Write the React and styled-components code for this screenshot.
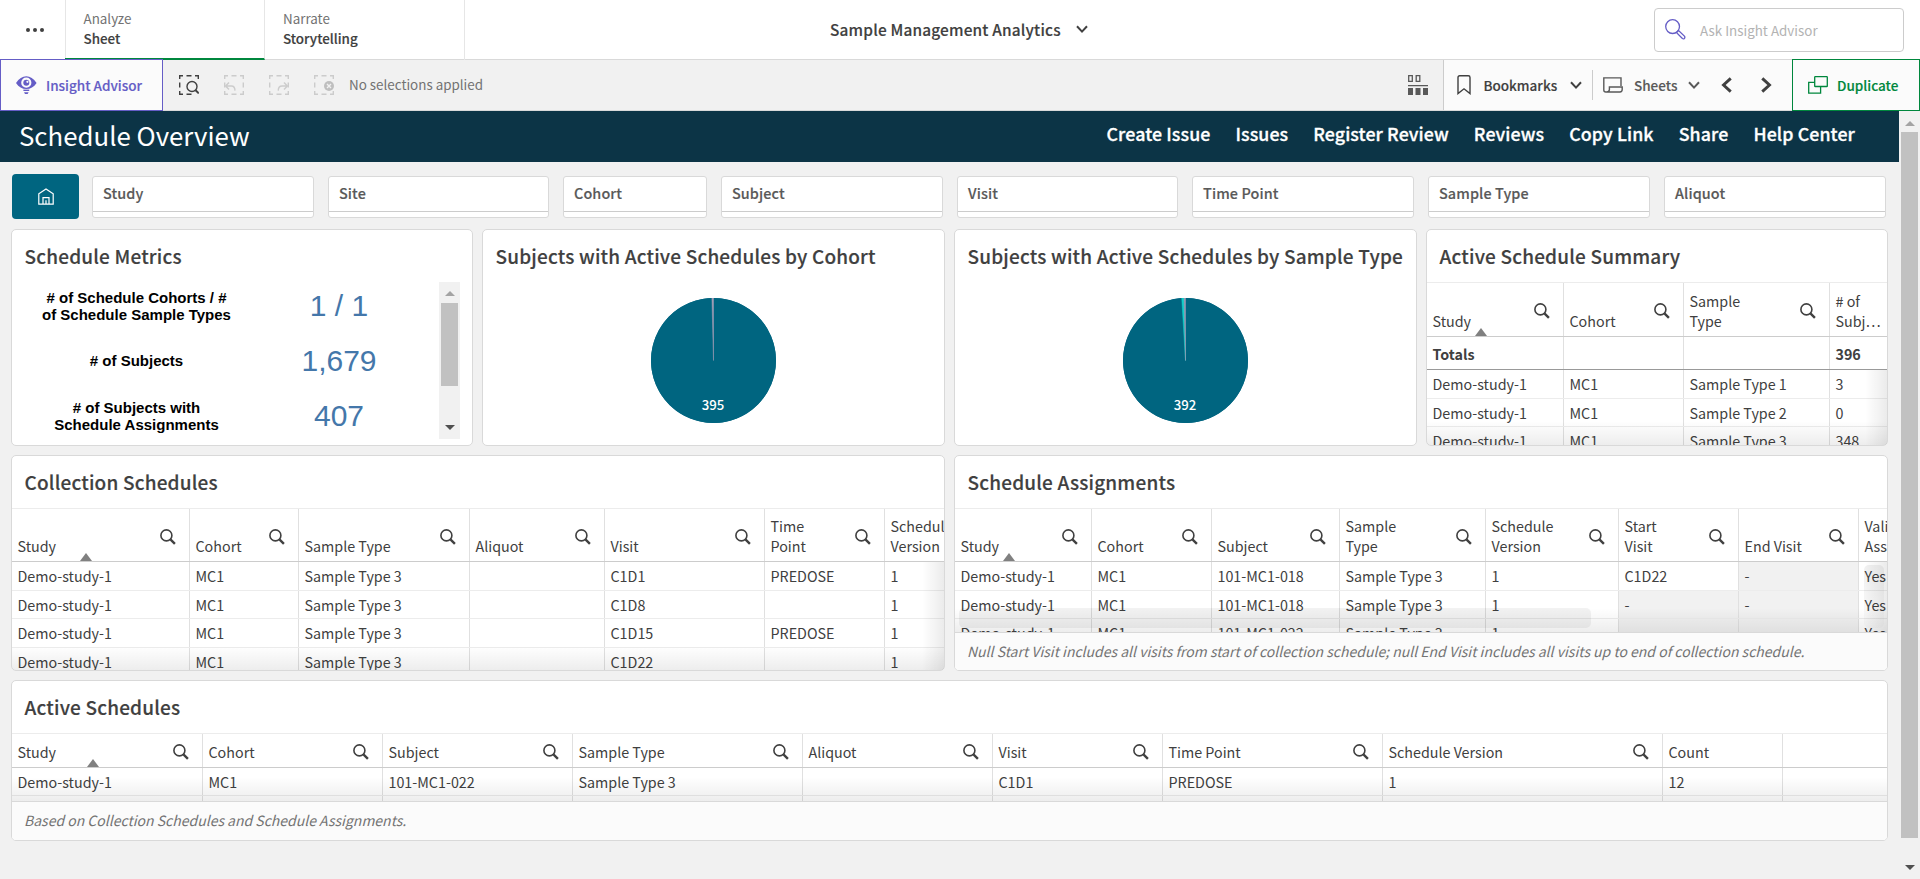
import React from 'react'
import styled, { createGlobalStyle, css } from 'styled-components'

const GlobalStyle = createGlobalStyle`
  * {
    box-sizing: border-box;
  }

  html, body {
    margin: 0;
    padding: 0;
    background: #f1f1f1;
    overflow: hidden;
  }

  body {
    font-family: 'Noto Sans CJK JP', 'Noto Sans', sans-serif;
    font-size: 14.3px;
    color: #404040;
  }
`

const Page = styled.div`
  display: flex;
  flex-direction: column;
  width: 1920px;
  height: 879px;
  background: #f1f1f1;
`

/* the medium weight is a little light, so it gets a thin stroke */
const semibold = css`
  font-weight: 500;
  -webkit-text-stroke: 0.15px currentColor;
`

/* top bar */

const TopBar = styled.header`
  display: flex;
  height: 60px;
  background: #fff;
  border-bottom: 1px solid #d9d9d9;
`

const MenuButton = styled.div`
  display: flex;
  align-items: center;
  justify-content: center;
  width: 66px;
  padding: 1px 0 0 5px;
  border-right: 1px solid #e6e6e6;
`

const Tab = styled.div`
  width: ${props => props.$width}px;
  height: 60px;
  padding: 8px 0 0 ${props => props.$pad}px;
  line-height: 20px;
  font-size: 13.4px;
  border-right: 1px solid #e6e6e6;
  color: #737373;
  ${props => props.$active && css`
    margin-left: -1px;
    border-bottom: 2px solid #00873d;
  `}

  strong {
    display: block;
    ${semibold}
    color: #404040;
  }
`

const AppTitle = styled.div`
  flex: 1;
  display: flex;
  align-items: center;
  padding: 0 0 1px 365px;
  font-size: 15.4px;
  letter-spacing: 0.18px;
  ${semibold}
  gap: 15px;
`

const AskBox = styled.div`
  display: flex;
  align-items: center;
  width: 250px;
  height: 44px;
  margin: 8px 16px 0 0;
  padding: 0 0 1px 10px;
  gap: 14px;
  border: 1px solid #ccc;
  border-radius: 4px;
  font-size: 13.4px;
  color: #b3b3b3;
`

/* selections toolbar */

const Toolbar = styled.div`
  display: flex;
  height: 51px;
  align-items: stretch;
  border-bottom: 1px solid #d9d9d9;
`

const AdvisorButton = styled.div`
  display: flex;
  align-items: center;
  width: 163px;
  height: 52px;
  margin-top: -1px;
  padding: 0 0 1px 15px;
  gap: 9px;
  border: 1px solid #655dc6;
  background: #fbfbfb;
  color: #655dc6;
  ${semibold}
  font-size: 13.5px;
`

const SelectionTools = styled.div`
  flex: 1;
  display: flex;
  align-items: center;
  gap: 25px;
  padding-left: 16px;
`

const SelectionText = styled.span`
  margin: -2px 0 0 -10px;
  color: #737373;
  font-size: 13.4px;
`

const GridButton = styled.div`
  display: flex;
  align-items: center;
  width: 36px;
  border-right: 1px solid #ccc;
`

const NavGroup = styled.div`
  display: flex;
  align-items: center;
  width: 348px;
  background: #fbfbfb;
`

const NavItem = styled.div`
  display: flex;
  align-items: center;
  gap: ${props => props.$gap}px;
  width: ${props => props.$width}px;
  height: 30px;
  padding-left: ${props => props.$pad}px;
  border-right: ${props => (props.$divider ? '1px solid #ccc' : '0')};
  ${semibold}
  font-size: 13.5px;
  color: ${props => props.$color || '#404040'};
`

const DuplicateButton = styled(AdvisorButton)`
  width: 128px;
  border-color: #00873d;
  color: #00873d;
`

/* sheet */

const SheetArea = styled.div`
  display: flex;
  flex: 1;
  min-height: 0;
`

const Sheet = styled.main`
  width: 1899px;
`

const SheetHeader = styled.div`
  display: flex;
  justify-content: space-between;
  height: 51px;
  padding: 0 44px 0 19px;
  background: #0c3446;
  color: #fff;
`

const SheetTitle = styled.h1`
  margin: 0;
  font-size: 25.8px;
  line-height: 48px;
  font-weight: 400;
`

const SheetLinks = styled.nav`
  display: flex;
  gap: 25px;
  font-size: 17.8px;
  letter-spacing: 0.1px;
  line-height: 45px;
  font-weight: 500;
  -webkit-text-stroke: 0.3px currentColor;
`

const Filters = styled.div`
  display: flex;
  align-items: flex-start;
  height: 45px;
  margin: 12px 0 10px 12px;
  gap: 14px;
`

const HomeButton = styled.div`
  display: flex;
  align-items: center;
  justify-content: center;
  width: 67px;
  height: 45px;
  margin-right: -1px;
  border-radius: 4px;
  background: #006580;
`

const Filter = styled.div`
  width: ${props => props.$width}px;
  height: 42px;
  margin-top: 2px;
  padding-left: 10px;
  line-height: 32px;
  border: 1px solid #d9d9d9;
  border-radius: 3px;
  background: linear-gradient(#ccc, #ccc) 0 34px / 100% 1px no-repeat #fff;
  ${semibold}
  font-size: 14.4px;
  letter-spacing: 0.1px;
  color: #595959;
`

const Grid = styled.div`
  display: grid;
  grid-template-columns: 462px 463px 463px 462px;
  grid-template-rows: 217px 216px 161px;
  gap: 9px;
  margin-left: 11px;
`

const CardBox = styled.section`
  display: flex;
  flex-direction: column;
  grid-column: span ${props => props.$span || 1};
  border: 1px solid #d9d9d9;
  border-radius: 5px;
  background: #fff;
  overflow: hidden;
`

const CardTitle = styled.h2`
  flex: none;
  height: 52px;
  margin: 0;
  padding-left: 12.5px;
  line-height: 52px;
  font-size: 19px;
  letter-spacing: 0.18px;
  ${semibold}
  white-space: nowrap;
`

const CardBody = styled.div`
  position: relative;
  flex: 1;
  min-height: 0;
  overflow: hidden;
`

const Footnote = styled.div`
  flex: none;
  height: ${props => props.$height}px;
  padding-left: 12px;
  line-height: 37px;
  border-top: 1px solid #d9d9d9;
  background: #fbfbfb;
  font-style: italic;
  font-size: 14px;
  color: #737373;
  white-space: nowrap;
`

/* tables */

const HeadRow = styled.div`
  display: flex;
  height: ${props => props.$height}px;
  border-top: 1px solid #ececec;
  border-bottom: 1px solid #ccc;
`

const cellBase = css`
  flex: ${props => (props.$width ? 'none' : '1')};
  width: ${props => (props.$width ? props.$width + 'px' : 'auto')};
  border-right: ${props => (props.$width ? '1px solid #e0e0e0' : '0')};
  white-space: pre;
`

const HeadCell = styled.div`
  ${cellBase}
  display: flex;
  align-items: center;
`

const HeadLabel = styled.div`
  position: relative;
  flex: 1;
  align-self: stretch;
  display: flex;
  align-items: flex-end;
  padding: 0 0 5.5px 5.5px;
  line-height: 20px;
`

const SortMark = styled.i`
  position: absolute;
  left: 50%;
  bottom: 0;
  margin-left: -6px;
  border: 6px solid transparent;
  border-top: 0;
  border-bottom: 8px solid #808080;
`

const SearchSlot = styled.div`
  width: 29px;
  height: 16px;
  margin-top: 3px;
  line-height: 0;
`

const Row = styled.div`
  display: flex;
  height: ${props => props.$height}px;
  border-bottom: 1px solid ${props => (props.$total ? '#999' : '#ececec')};
  font-weight: ${props => (props.$total ? 700 : 400)};
`

const Cell = styled.div`
  ${cellBase}
  padding-left: 5.5px;
  line-height: ${props => props.$line || 28}px;
  background: ${props => (props.$empty ? '#f1f1f1' : 'transparent')};
`

const FadeBottom = styled.div`
  position: absolute;
  left: 0;
  right: 0;
  bottom: 0;
  height: 24px;
  background: linear-gradient(rgba(0, 0, 0, 0), rgba(0, 0, 0, 0.07));
`

const FadeRight = styled.div`
  position: absolute;
  top: ${props => props.$top}px;
  right: 0;
  bottom: 0;
  width: 22px;
  background: linear-gradient(90deg, rgba(0, 0, 0, 0), rgba(0, 0, 0, 0.08));
`

const ScrollHintX = styled.div`
  position: absolute;
  left: 4px;
  bottom: 4px;
  width: 632px;
  height: 20px;
  border-radius: 5px;
  background: rgba(0, 0, 0, 0.05);
`

const ScrollHintY = styled.div`
  position: absolute;
  right: 3px;
  bottom: 4px;
  width: 20px;
  height: 63px;
  border-radius: 5px;
  background: linear-gradient(rgba(0, 0, 0, 0.06), rgba(0, 0, 0, 0.02));
`

/* metrics */

const Metrics = styled.div`
  display: flex;
  justify-content: space-between;
  height: 157px;
  padding-right: 12px;
`

const MetricList = styled.div`
  margin-top: -3px;
  font-family: 'Liberation Sans', Arial, sans-serif;
`

const Metric = styled.div`
  display: flex;
  align-items: center;
  height: 55px;
`

const MetricLabel = styled.div`
  width: 249px;
  padding-bottom: 2px;
  text-align: center;
  font-size: 15px;
  line-height: 17px;
  font-weight: 700;
  color: #000;
  white-space: pre;
`

const MetricValue = styled.div`
  width: 156px;
  padding-bottom: 2px;
  text-align: center;
  font-size: 30px;
  color: #4477aa;
`

/* scrollbars */

const Track = styled.div`
  display: flex;
  flex-direction: column;
  align-items: center;
  width: 21px;
  height: 100%;
  background: #f1f1f1;
`

const Thumb = styled.div`
  width: 17px;
  height: ${props => props.$height}px;
  margin-bottom: auto;
  background: #c1c1c1;
`

const Arrow = styled.i`
  margin: ${props => props.$margin};
  border: 5px solid transparent;
  ${props => (props.$down
    ? 'border-bottom: 0; border-top-color: #505050;'
    : 'border-top: 0; border-bottom-color: #a3a3a3;')}
`

const Chevron = ({ size = 11, rotate = 0, stroke = 2, color = '#404040' }) => (
  <svg width={size} height={size} viewBox="0 0 12 12" fill="none" stroke={color} strokeWidth={stroke}>
    <path d="M1 3.2 L6 8.6 L11 3.2" transform={`rotate(${rotate} 6 6)`} />
  </svg>
)

const SearchIcon = () => (
  <svg width="16" height="16" viewBox="0 0 16 16" fill="none" stroke="#404040">
    <circle cx="6.4" cy="6.4" r="5.5" strokeWidth="1.6" />
    <path d="M10.4 10.4 L14.9 14.9" strokeWidth="2.4" />
  </svg>
)

const AskIcon = () => (
  <svg width="21" height="21" viewBox="0 0 21 21" fill="none" stroke="#655dc6" strokeWidth="1.3">
    <circle cx="7.6" cy="7.6" r="6.9" />
    <path d="M12.4 12.4 L13.6 11.6 L19.6 17.4 Q20.2 18.6 19.4 19.4 Q18.4 20.2 17.4 19.5 L11.6 13.6 Z" />
  </svg>
)

const AdvisorIcon = () => (
  <svg width="21" height="20" viewBox="0 0 21 20" fill="#655dc6">
    <path fillRule="evenodd" d="M0 8 C3 3.5 6.5 1.2 10.3 1.2 C14.1 1.2 17.6 3.5 20.6 8 C17.8 12 14.5 14 10.3 14 C6.1 14 2.8 12 0 8 Z M10.3 2.6 A5 5 0 1 0 10.3 12.8 A5 5 0 1 0 10.3 2.6 Z" />
    <circle cx="10.3" cy="7.8" r="3" />
    <circle cx="11.4" cy="6.8" r="1.1" fill="#fbfbfb" />
    <path d="M7.4 14.6 H13.2 V16 H7.4 Z" />
    <path d="M8 17.2 H12.6 L11.6 19 H9 Z" />
  </svg>
)

const Dashes = ({ color, children }) => (
  <svg width="20" height="20" viewBox="0 0 20 20" fill="none" stroke={color} strokeWidth="1.4">
    <path d="M0.7 4 V0.7 H4 M7.5 0.7 H12.5 M16 0.7 H19.3 V4 M0.7 7.5 V12.5 M0.7 16 V19.3 H4 M7.5 19.3 H12.5" />
    {children}
  </svg>
)

const corner = 'M19.3 7.5 V12.5 M16 19.3 H19.3 V16'

const BookmarkIcon = () => (
  <svg width="14" height="20" viewBox="0 0 14 20" fill="none" stroke="#404040" strokeWidth="1.4">
    <path d="M1 18.6 V2.5 Q1 0.8 2.7 0.8 H11.3 Q13 0.8 13 2.5 V18.6 L7 13.8 Z" />
  </svg>
)

const SheetIcon = () => (
  <svg width="20" height="16" viewBox="0 0 20 16" fill="none" stroke="#595959" strokeWidth="1.4">
    <path d="M18 9 V0.9 H0.8 V13 Q0.8 15 2.8 15 H17 Q19.2 15 19.2 12.6 V10 H6.4 V12.6 Q6.2 15 3.8 15" />
  </svg>
)

const LayoutIcon = () => (
  <svg width="20" height="20" viewBox="0 0 20 20">
    <path d="M0.7 0.7 H4.3 V6.3 H0.7 Z M8.2 0.7 H11.8 V6.3 H8.2 Z" fill="none" stroke="#595959" strokeWidth="1.3" />
    <path d="M0 10 H20 V11.3 H0 Z M0 13 H5 V20 H0 Z M7.5 13 H12.5 V20 H7.5 Z M15 13 H20 V20 H15 Z" fill="#595959" />
  </svg>
)

const DuplicateIcon = () => (
  <svg width="20" height="18" viewBox="0 0 20 18" fill="none" stroke="#00873d" strokeWidth="1.3">
    <rect x="6.7" y="0.7" width="12.6" height="9.8" rx="0.6" />
    <path d="M6.7 6.4 H0.7 V17.2 H12.6 V10.6" />
  </svg>
)

const HomeIcon = () => (
  <svg width="16" height="17" viewBox="0 0 16 17" fill="none" stroke="#fff" strokeWidth="1.2">
    <path d="M0.8 16.2 V5.8 L8 0.9 L15.2 5.8 V16.2 Z" />
    <path d="M5 16 V9.6 H11 V16 M8 16 V12.2" />
  </svg>
)

const pieColors = ['#006580', '#10cfc9', '#a39cb5']

const slicePath = (from, to, r) => {
  const point = t => {
    const a = t * 2 * Math.PI - Math.PI / 2
    return `${r + r * Math.cos(a)} ${r + r * Math.sin(a)}`
  }
  return `M${r} ${r} L${point(from)} A${r} ${r} 0 ${to - from > 0.5 ? 1 : 0} 1 ${point(to)} Z`
}

const PieWrap = styled.div`
  padding: 16px 0 0 ${props => props.$left}px;
`

const Pie = ({ slices, left }) => {
  const total = slices.reduce((sum, s) => sum + s.value, 0)
  let at = 0
  return (
    <PieWrap $left={left}>
      <svg width="125" height="125" viewBox="0 0 125 125">
        <circle cx="62.5" cy="62.5" r="62.5" fill={pieColors[0]} />
        {slices.map((s, i) => {
          const from = at / total
          at += s.value
          return (
            <path
              key={i}
              d={slicePath(from, at / total, 62.5)}
              fill={s.color}
              stroke={i ? s.color : 'none'}
              strokeWidth="0.5"
            />
          )
        })}
        <text x="62" y="112" textAnchor="middle" fontSize="13.2" fontWeight="500" fill="#fff">{slices[0].value}</text>
      </svg>
    </PieWrap>
  )
}

const Table = ({ columns, rows, headHeight = 54, totals, shortFirst, children }) => (
  <CardBody>
    <HeadRow $height={headHeight}>
      {columns.map((c, i) => (
        <HeadCell key={i} $width={c.width}>
          <HeadLabel>
            {c.label}
            {i === 0 && <SortMark />}
          </HeadLabel>
          {c.search !== false && <SearchSlot><SearchIcon /></SearchSlot>}
        </HeadCell>
      ))}
    </HeadRow>
    {totals && (
      <Row $height={33} $total>
        {columns.map((c, i) => <Cell key={i} $width={c.width} $line={33}>{totals[i]}</Cell>)}
      </Row>
    )}
    {rows.map((row, r) => (
      <Row key={r} $height={(r % 2 === 0) !== !!shortFirst ? 29 : 28}>
        {columns.map((c, i) => (
          <Cell key={i} $width={c.width} $empty={row[i] === '-'}>{row[i]}</Cell>
        ))}
      </Row>
    ))}
    <FadeBottom />
    {children}
  </CardBody>
)

const filters = [
  ['Study', 222], ['Site', 221], ['Cohort', 144], ['Subject', 222],
  ['Visit', 221], ['Time Point', 222], ['Sample Type', 222], ['Aliquot', 222]
]

const links = ['Create Issue', 'Issues', 'Register Review', 'Reviews', 'Copy Link', 'Share', 'Help Center']

const metrics = [
  ['# of Schedule Cohorts / #\nof Schedule Sample Types', '1 / 1'],
  ['# of Subjects', '1,679'],
  ['# of Subjects with\nSchedule Assignments', '407']
]

const summaryColumns = [
  { label: 'Study', width: 137 },
  { label: 'Cohort', width: 120 },
  { label: 'Sample\nType', width: 146 },
  { label: '# of\nSubj…', search: false }
]

const summaryRows = [
  ['Demo-study-1', 'MC1', 'Sample Type 1', '3'],
  ['Demo-study-1', 'MC1', 'Sample Type 2', '0'],
  ['Demo-study-1', 'MC1', 'Sample Type 3', '348']
]

const collectionColumns = [
  { label: 'Study', width: 178 },
  { label: 'Cohort', width: 109 },
  { label: 'Sample Type', width: 171 },
  { label: 'Aliquot', width: 135 },
  { label: 'Visit', width: 160 },
  { label: 'Time\nPoint', width: 120 },
  { label: 'Schedule\nVersion', width: 120 }
]

const collectionRows = [
  ['Demo-study-1', 'MC1', 'Sample Type 3', '', 'C1D1', 'PREDOSE', '1'],
  ['Demo-study-1', 'MC1', 'Sample Type 3', '', 'C1D8', '', '1'],
  ['Demo-study-1', 'MC1', 'Sample Type 3', '', 'C1D15', 'PREDOSE', '1'],
  ['Demo-study-1', 'MC1', 'Sample Type 3', '', 'C1D22', '', '1']
]

const assignmentColumns = [
  { label: 'Study', width: 137 },
  { label: 'Cohort', width: 120 },
  { label: 'Subject', width: 128 },
  { label: 'Sample\nType', width: 146 },
  { label: 'Schedule\nVersion', width: 133 },
  { label: 'Start\nVisit', width: 120 },
  { label: 'End Visit', width: 120 },
  { label: 'Valid\nAssignment', width: 120 }
]

const assignmentRows = [
  ['Demo-study-1', 'MC1', '101-MC1-018', 'Sample Type 3', '1', 'C1D22', '-', 'Yes'],
  ['Demo-study-1', 'MC1', '101-MC1-018', 'Sample Type 3', '1', '-', '-', 'Yes'],
  ['Demo-study-1', 'MC1', '101-MC1-022', 'Sample Type 3', '1', '-', '-', 'Yes']
]

const activeColumns = [
  { label: 'Study', width: 191 },
  { label: 'Cohort', width: 180 },
  { label: 'Subject', width: 190 },
  { label: 'Sample Type', width: 230 },
  { label: 'Aliquot', width: 190 },
  { label: 'Visit', width: 170 },
  { label: 'Time Point', width: 220 },
  { label: 'Schedule Version', width: 280 },
  { label: 'Count', width: 120, search: false },
  { label: '', search: false }
]

const activeRows = [
  ['Demo-study-1', 'MC1', '101-MC1-022', 'Sample Type 3', '', 'C1D1', 'PREDOSE', '1', '12'],
  []
]

const App = () => (
  <Page>
    <GlobalStyle />
    <TopBar>
      <MenuButton>
        <svg width="18" height="4" viewBox="0 0 18 4" fill="#404040">
          <circle cx="2" cy="2" r="2" />
          <circle cx="9" cy="2" r="2" />
          <circle cx="16" cy="2" r="2" />
        </svg>
      </MenuButton>
      <Tab $width={200} $pad={18.5} $active>Analyze<strong>Sheet</strong></Tab>
      <Tab $width={200} $pad={18}>Narrate<strong>Storytelling</strong></Tab>
      <AppTitle>Sample Management Analytics <Chevron size={12} /></AppTitle>
      <AskBox><AskIcon />Ask Insight Advisor</AskBox>
    </TopBar>

    <Toolbar>
      <AdvisorButton><AdvisorIcon />Insight Advisor</AdvisorButton>
      <SelectionTools>
        <Dashes color="#404040">
          <circle cx="13" cy="11.5" r="5" />
          <path d="M16.6 15.2 L19.8 18.4" strokeWidth="2" />
        </Dashes>
        <Dashes color="#ccc">
          <path d={corner} />
          <path d="M5 7.5 L1.6 11 L5 14.5 M1.8 11 H7.5 Q10.8 11 11 15.6" />
        </Dashes>
        <Dashes color="#ccc">
          <path d={corner} />
          <path d="M15 7.5 L18.4 11 L15 14.5 M18.2 11 H13 Q9.4 11 9.2 15.6" />
        </Dashes>
        <Dashes color="#ccc">
          <path d="M16 19.3 H19.3 V16" />
          <circle cx="15" cy="11" r="5" fill="#bfbfbf" stroke="none" />
          <path d="M13 9 L17 13 M17 9 L13 13" stroke="#f1f1f1" />
        </Dashes>
        <SelectionText>No selections applied</SelectionText>
      </SelectionTools>
      <GridButton><LayoutIcon /></GridButton>
      <NavGroup>
        <NavItem $width={149} $pad={13} $gap={12.5} $divider>
          <BookmarkIcon />Bookmarks<Chevron size={12} />
        </NavItem>
        <NavItem $width={126} $pad={10} $gap={11} $color="#595959">
          <SheetIcon />Sheets<Chevron size={12} color="#595959" />
        </NavItem>
        <Chevron size={16} rotate={90} stroke={2.2} />
        <NavItem $pad={23}><Chevron size={16} rotate={-90} stroke={2.2} /></NavItem>
      </NavGroup>
      <DuplicateButton><DuplicateIcon />Duplicate</DuplicateButton>
    </Toolbar>

    <SheetArea>
      <Sheet>
        <SheetHeader>
          <SheetTitle>Schedule Overview</SheetTitle>
          <SheetLinks>
            {links.map(l => <span key={l}>{l}</span>)}
          </SheetLinks>
        </SheetHeader>

        <Filters>
          <HomeButton><HomeIcon /></HomeButton>
          {filters.map(([name, width]) => <Filter key={name} $width={width}>{name}</Filter>)}
        </Filters>

        <Grid>
          <CardBox>
            <CardTitle>Schedule Metrics</CardTitle>
            <Metrics>
              <MetricList>
                {metrics.map(([label, value]) => (
                  <Metric key={label}>
                    <MetricLabel>{label}</MetricLabel>
                    <MetricValue>{value}</MetricValue>
                  </Metric>
                ))}
              </MetricList>
              <Track>
                <Arrow $margin="9px 0 7px" />
                <Thumb $height={83} />
                <Arrow $down $margin="0 0 9px" />
              </Track>
            </Metrics>
          </CardBox>

          <CardBox>
            <CardTitle>Subjects with Active Schedules by Cohort</CardTitle>
            <Pie left={168} slices={[{ value: 395, color: pieColors[0] }, { value: 1.6, color: pieColors[2] }]} />
          </CardBox>

          <CardBox>
            <CardTitle>Subjects with Active Schedules by Sample Type</CardTitle>
            <Pie
              left={168}
              slices={[
                { value: 392, color: pieColors[0] },
                { value: 2.4, color: pieColors[1] },
                { value: 1.4, color: pieColors[2] }
              ]}
            />
          </CardBox>

          <CardBox>
            <CardTitle>Active Schedule Summary</CardTitle>
            <Table columns={summaryColumns} rows={summaryRows} headHeight={55} totals={['Totals', '', '', '396']}>
              <FadeRight $top={88} />
            </Table>
          </CardBox>

          <CardBox $span={2}>
            <CardTitle>Collection Schedules</CardTitle>
            <Table columns={collectionColumns} rows={collectionRows}>
              <FadeRight $top={54} />
            </Table>
          </CardBox>

          <CardBox $span={2}>
            <CardTitle>Schedule Assignments</CardTitle>
            <Table columns={assignmentColumns} rows={assignmentRows}>
              <FadeRight $top={54} />
              <ScrollHintX />
              <ScrollHintY />
            </Table>
            <Footnote $height={38}>
              Null Start Visit includes all visits from start of collection schedule; null End Visit includes all visits up to end of collection schedule.
            </Footnote>
          </CardBox>

          <CardBox $span={4}>
            <CardTitle>Active Schedules</CardTitle>
            <Table columns={activeColumns} rows={activeRows} headHeight={35} shortFirst />
            <Footnote $height={39}>Based on Collection Schedules and Schedule Assignments.</Footnote>
          </CardBox>
        </Grid>
      </Sheet>
      <Track>
        <Arrow $margin="10px 0 6px" />
        <Thumb $height={706} />
        <Arrow $down $margin="0 0 9px" />
      </Track>
    </SheetArea>
  </Page>
)

export default App
